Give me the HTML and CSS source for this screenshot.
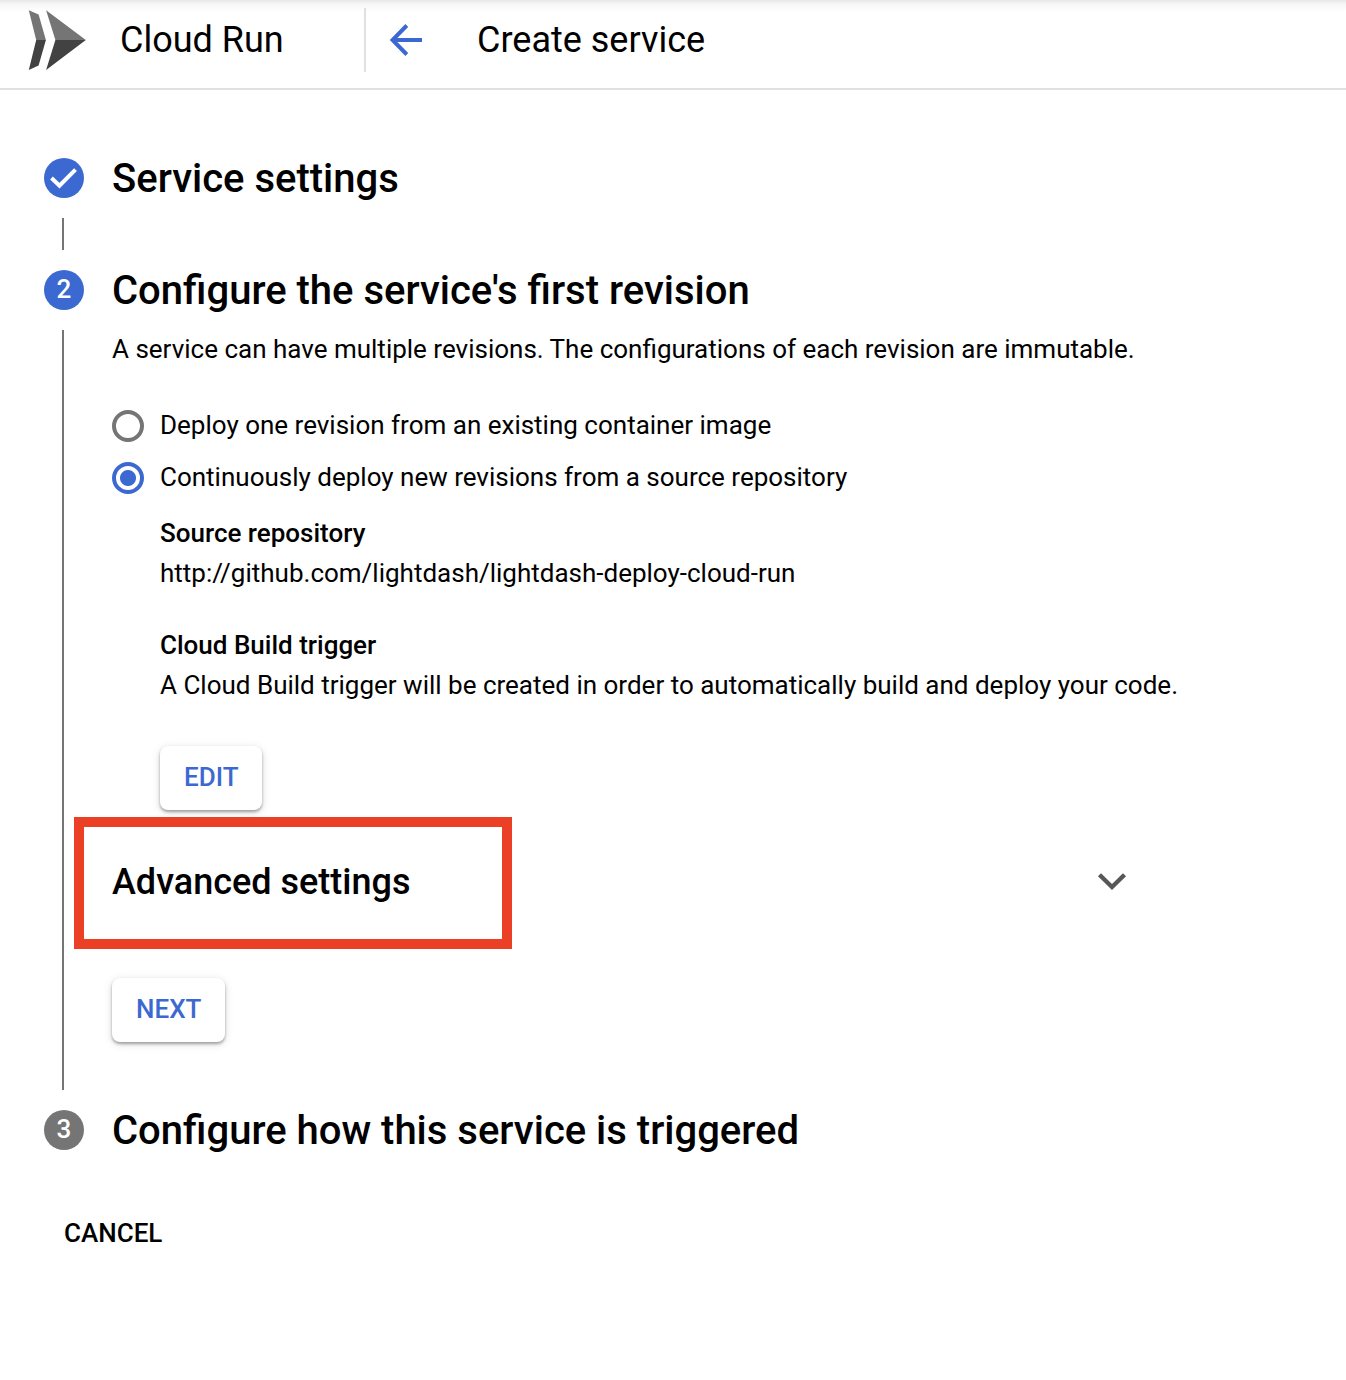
FILE: index.html
```html
<!DOCTYPE html>
<html lang="en">
<head>
<meta charset="utf-8">
<title>Create service – Cloud Run</title>
<link rel="stylesheet" href="styles.css">
</head>
<body>
<header class="topbar">
  <svg class="logo" width="60" height="64" viewBox="0 0 60 64">
    <path fill="#757575" d="M.8 2.200 10.600 6.600 17.900 32H8.200zM18.100 2.200 57.800 32H27.400z"/>
    <path fill="#424242" d="M.8 62 10.600 57.400 17.900 32H8.200zM18.100 62 57.800 32H27.400z"/>
  </svg>
  <div class="product">Cloud Run</div>
  <div class="titlebar">
    <svg class="back" width="34" height="34" viewBox="0 0 34 34" fill="none" stroke="#3c69d1" stroke-width="4">
      <path d="M32 17H3.500M16.800 2.500 2.500 17l14.300 14.500"/>
    </svg>
    <h1 class="title">Create service</h1>
  </div>
</header>
<main class="stepper">
  <section class="step step-done">
    <div class="rail">
      <div class="badge"><svg width="40" height="40" viewBox="0 0 40 40" fill="none" stroke="#fff" stroke-width="4"><path d="M7.500 20 15.500 27.600 31.500 11.600"/></svg></div>
      <div class="line"></div>
    </div>
    <div class="content"><h2 class="heading">Service settings</h2></div>
  </section>
  <section class="step step-current">
    <div class="rail"><div class="badge">2</div><div class="line"></div></div>
    <div class="content">
      <h2 class="heading">Configure the service's first revision</h2>
      <p class="intro">A service can have multiple revisions. The configurations of each revision are immutable.</p>
      <div class="options">
        <label class="option"><span class="radio"></span><span class="text">Deploy one revision from an existing container image</span></label>
        <label class="option"><span class="radio radio-on"></span><span class="text">Continuously deploy new revisions from a source repository</span></label>
      </div>
      <div class="details">
        <dl class="detail"><dt>Source repository</dt><dd>http://github.com/lightdash/lightdash-deploy-cloud-run</dd></dl>
        <dl class="detail"><dt>Cloud Build trigger</dt><dd>A Cloud Build trigger will be created in order to automatically build and deploy your code.</dd></dl>
        <button class="button">EDIT</button>
      </div>
      <div class="advanced">
        <h3 class="advanced-title">Advanced settings</h3>
        <svg class="chevron" width="32" height="32" viewBox="0 0 32 32" fill="none" stroke="#575757" stroke-width="4.400"><path d="M3.500 8.800 16 21 28.500 8.800"/></svg>
        <div class="highlight"></div>
      </div>
      <button class="button">NEXT</button>
    </div>
  </section>
  <section class="step">
    <div class="rail"><div class="badge badge-pending">3</div></div>
    <div class="content"><h2 class="heading">Configure how this service is triggered</h2></div>
  </section>
  <button class="cancel">CANCEL</button>
</main>
</body>
</html>
```

FILE: styles.css
```css
* { box-sizing: border-box; }
body { margin: 0; background: #fff; color: #000; font: 400 26px/40px Roboto, sans-serif; letter-spacing: 0; min-height: 1380px; }
h1, h2, h3, p, dl, dd { margin: 0; }
button { border: 0; background: #fff; font: inherit; font-weight: 500; white-space: nowrap; }

.topbar {
  display: flex; align-items: center; height: 90px; padding: 0 28px 8px;
  border-bottom: 2px solid #e0e0e0;
  background: linear-gradient(#e8e8e8, #f6f6f6 4px, #fff 12px);
}
.logo { flex: none; }
.product { width: 244px; margin-left: 32px; font-size: 36px; }
.titlebar { display: flex; align-items: center; height: 64px; padding-left: 24px; border-left: 2px solid #e0e0e0; }
.back { flex: none; }
.title { margin-left: 53px; font-size: 36px; font-weight: 400; }

.stepper { padding: 68px 44px 0; }
.step { display: flex; gap: 28px; }
.step-done { height: 112px; }
.step-current { height: 840px; }
.rail { display: flex; flex-direction: column; flex: none; width: 40px; }
.badge {
  flex: none; width: 40px; height: 40px; border-radius: 50%;
  background: #3c69d1; color: #fff; font-weight: 500; line-height: 38px; text-align: center;
}
.badge svg { display: block; }
.badge-pending { background: #757575; }
.line { flex: 1; width: 2px; margin: 20px 0 20px 18px; background: #757575; }

.content { flex: 1; }
.heading { font-size: 40px; font-weight: 500; line-height: 42px; white-space: nowrap; }
.intro { margin-top: 17px; white-space: nowrap; }
.options { display: grid; gap: 12px; margin-top: 37px; }
.option { display: flex; align-items: center; gap: 16px; height: 40px; }
.radio { width: 32px; height: 32px; border: 4px solid #757575; border-radius: 50%; }
.radio-on { border-color: #3c69d1; background: radial-gradient(circle, #3c69d1 7.500px, transparent 8.500px); }
.text { margin-top: -2px; }

.details { padding: 15px 0 0 48px; }
.detail { margin-bottom: 32px; white-space: nowrap; }
dt { font-weight: 500; }
.button {
  display: block; height: 64px; padding: 0 24px 2px; border-radius: 8px; color: #3c69d1;
  box-shadow: 0 2px 3px rgba(0, 0, 0, .32), 0 2px 10px rgba(0, 0, 0, .13);
}
.details .button { width: 102px; margin-top: 41px; }

.advanced { position: relative; display: flex; align-items: center; justify-content: space-between; width: 1016px; height: 144px; margin: 0 0 24px; }
.advanced-title { font-size: 36px; font-weight: 500; }
.highlight { position: absolute; left: -38px; top: 7px; width: 438px; height: 132px; border: 10px solid #eb4026; }
.cancel { display: block; margin-top: 61px; padding: 0 20px; line-height: 40px; color: #000; }
```
